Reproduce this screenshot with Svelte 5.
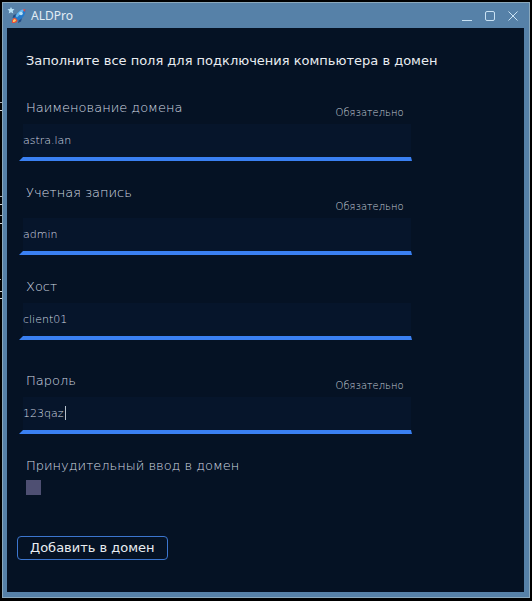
<script lang="ts">
  interface Field {
    id: string;
    label: string;
    value: string;
    required: boolean;
    layout?: 'tall' | 'spaced';
    focused?: boolean;
  }

  let fields = $state<Field[]>([
    { id: 'domain', label: 'Наименование домена', value: 'astra.lan', required: true },
    { id: 'account', label: 'Учетная запись', value: 'admin', required: true, layout: 'tall' },
    { id: 'host', label: 'Хост', value: 'client01', required: false, layout: 'spaced' },
    { id: 'password', label: 'Пароль', value: '123qaz', required: true, focused: true },
  ]);

  let force = $state(false);
</script>

<div class="desktop">
  <div class="window">
    <header class="titlebar">
      <svg class="app-icon" width="20" height="20" viewBox="0 0 20 20" aria-hidden="true">
        <path d="M4 1l1 2 2.5.2-1.8 1.7.6 2.6L4 6.3 1.7 7.5l.6-2.6L.5 3.2 3 3z" fill="#b9e3f8" />
        <path d="M10 8L6.500 9l-1 3 4-1zM15 12l-1 3.500-3 1.500 1-4z" fill="#244d86" />
        <path d="M18.500 3c-4-.2-7.500 2.500-10 7l-.5 2.500 2.500 2 2.500-.8C16.500 11.500 19 7.500 18.500 3z" fill="#2579c9" />
        <path d="M18.500 3c-4-.2-7.500 2.500-10 7l1.500 1.500z" fill="#65b5ec" />
        <path d="M18.500 3l-3 .5 2.500 2.500z" fill="#d74b45" />
        <circle cx="14" cy="7.500" r="1.800" fill="#b8e1f5" />
        <path d="M8.500 12c-3 0-4 2-3.500 5 3 .3 5.500-.5 5.500-3z" fill="#e7503c" />
        <path d="M8 13c-1.500.3-2.300 1.200-2 3 1.500 0 2.700-.6 3-1.800z" fill="#ffd067" />
      </svg>
      <span class="title">ALDPro</span>
      <div class="controls">
        <button type="button" aria-label="Свернуть">
          <svg width="12" height="12" viewBox="0 0 12 12"><path d="M1 10.500h10" /></svg>
        </button>
        <button type="button" aria-label="Развернуть">
          <svg width="12" height="12" viewBox="0 0 12 12"><rect x="1.500" y="1.500" width="9" height="9" rx="1.500" /></svg>
        </button>
        <button type="button" aria-label="Закрыть">
          <svg width="12" height="12" viewBox="0 0 12 12"><path d="M1.500 1.500l9 9M10.500 1.500l-9 9" /></svg>
        </button>
      </div>
    </header>

    <form class="content" onsubmit={(e) => e.preventDefault()}>
      <h1>Заполните все поля для подключения компьютера в домен</h1>

      {#each fields as field (field.id)}
        <div class="field {field.layout ?? ''}">
          <div class="field-head">
            <label for={field.id}>{field.label}</label>
            {#if field.required}
              <span class="required">Обязательно</span>
            {/if}
          </div>
          <div class="input-box">
            <input id={field.id} type="text" bind:value={field.value} autocomplete="off" spellcheck="false" />
            {#if field.focused}
              <span class="caret"></span>
            {/if}
          </div>
        </div>
      {/each}

      <div class="force">
        <label for="force">Принудительный ввод в домен</label>
        <input id="force" type="checkbox" bind:checked={force} />
      </div>

      <button class="submit" type="submit">Добавить в домен</button>
    </form>
  </div>
</div>

<style>
  :global(body) {
    background: #000;
  }

  .desktop {
    box-sizing: border-box;
    min-height: 100vh;
    padding: 2px 2px 3px;
    display: flex;
    /* края окна, лежащего позади */
    background:
      linear-gradient(#a9adb2, #a9adb2) 0 102px / 2px 1px no-repeat,
      linear-gradient(#d5d8db, #d5d8db) 0 110px / 2px 1px no-repeat,
      linear-gradient(#a9adb2, #a9adb2) 0 196px / 2px 1px no-repeat,
      linear-gradient(#d5d8db, #d5d8db) 0 204px / 2px 1px no-repeat,
      linear-gradient(#a9adb2, #a9adb2) 0 215px / 2px 1px no-repeat,
      linear-gradient(#d5d8db, #d5d8db) 0 223px / 2px 1px no-repeat,
      linear-gradient(#a9adb2, #a9adb2) 0 279px / 1px 1px no-repeat,
      linear-gradient(#d5d8db, #d5d8db) 0 291px / 2px 1px no-repeat,
      linear-gradient(#d5d8db, #d5d8db) 0 298px / 2px 1px no-repeat,
      #000;
  }

  .window {
    box-sizing: border-box;
    flex: 1;
    display: flex;
    flex-direction: column;
    padding: 0 5px 5px 4px;
    border: 1px solid #8ba9bd;
    background: #5681a8;
    font-family: 'DejaVu Sans', sans-serif;
  }

  .titlebar {
    display: flex;
    align-items: center;
    height: 25px;
  }

  .title {
    margin-left: 4px;
    color: #e3edf5;
    font-family: 'Noto Sans', sans-serif;
    font-size: 12px;
    line-height: 20px;
  }

  .controls {
    display: flex;
    gap: 11px;
    margin-left: auto;
    padding-right: 5px;
  }

  .controls button {
    display: flex;
    padding: 0;
    border: none;
    background: none;
  }

  .controls svg {
    fill: none;
    stroke: #c9e2f4;
    stroke-width: 1;
  }

  .content {
    flex: 1;
    display: flex;
    flex-direction: column;
    align-items: flex-start;
    padding: 23px 10px 32px;
    background: #051224;
  }

  h1 {
    margin: 0 0 27px;
    padding-left: 9px;
    color: #e9edf1;
    font-size: 13px;
    font-weight: 400;
    line-height: 20px;
  }

  .field {
    display: flex;
    flex-direction: column;
    width: 79%;
    margin-bottom: 22px;
    margin-left: 2px;
  }

  .field-head {
    display: flex;
    justify-content: space-between;
    height: 26px;
    padding: 0 8px 0 7px;
  }

  .tall .field-head {
    height: 35px;
  }

  .spaced {
    margin-bottom: 31px;
  }

  label {
    color: #d3dae2;
    font-size: 13px;
    font-weight: 200;
    line-height: 20px;
  }

  .required {
    align-self: flex-end;
    color: #c6ceda;
    font-size: 10px;
    font-weight: 200;
    line-height: 22px;
  }

  .input-box {
    position: relative;
    display: flex;
  }

  .input-box input {
    box-sizing: border-box;
    width: 100%;
    height: 37px;
    padding: 0;
    border: solid transparent;
    border-width: 0 1px 4px 4px;
    border-bottom-color: #3a80f2;
    outline: none;
    background: #06152b padding-box;
    color: #d3dae2;
    font-family: inherit;
    font-size: 11px;
    font-weight: 200;
  }

  .caret {
    position: absolute;
    top: 9px;
    left: 46px;
    width: 1px;
    height: 14px;
    background: #b6c0ca;
  }

  .force {
    display: flex;
    flex-direction: column;
    gap: 4px;
    margin-bottom: 41px;
    padding-left: 9px;
  }

  .force input {
    appearance: none;
    width: 15px;
    height: 15px;
    margin: 0;
    background: #4e4f72;
  }

  .submit {
    height: 24px;
    padding: 0 12px;
    border: 1px solid #3c76cf;
    border-radius: 4px;
    background: #051224;
    color: #e9edf1;
    font-family: inherit;
    font-size: 13px;
    line-height: 20px;
  }
</style>
